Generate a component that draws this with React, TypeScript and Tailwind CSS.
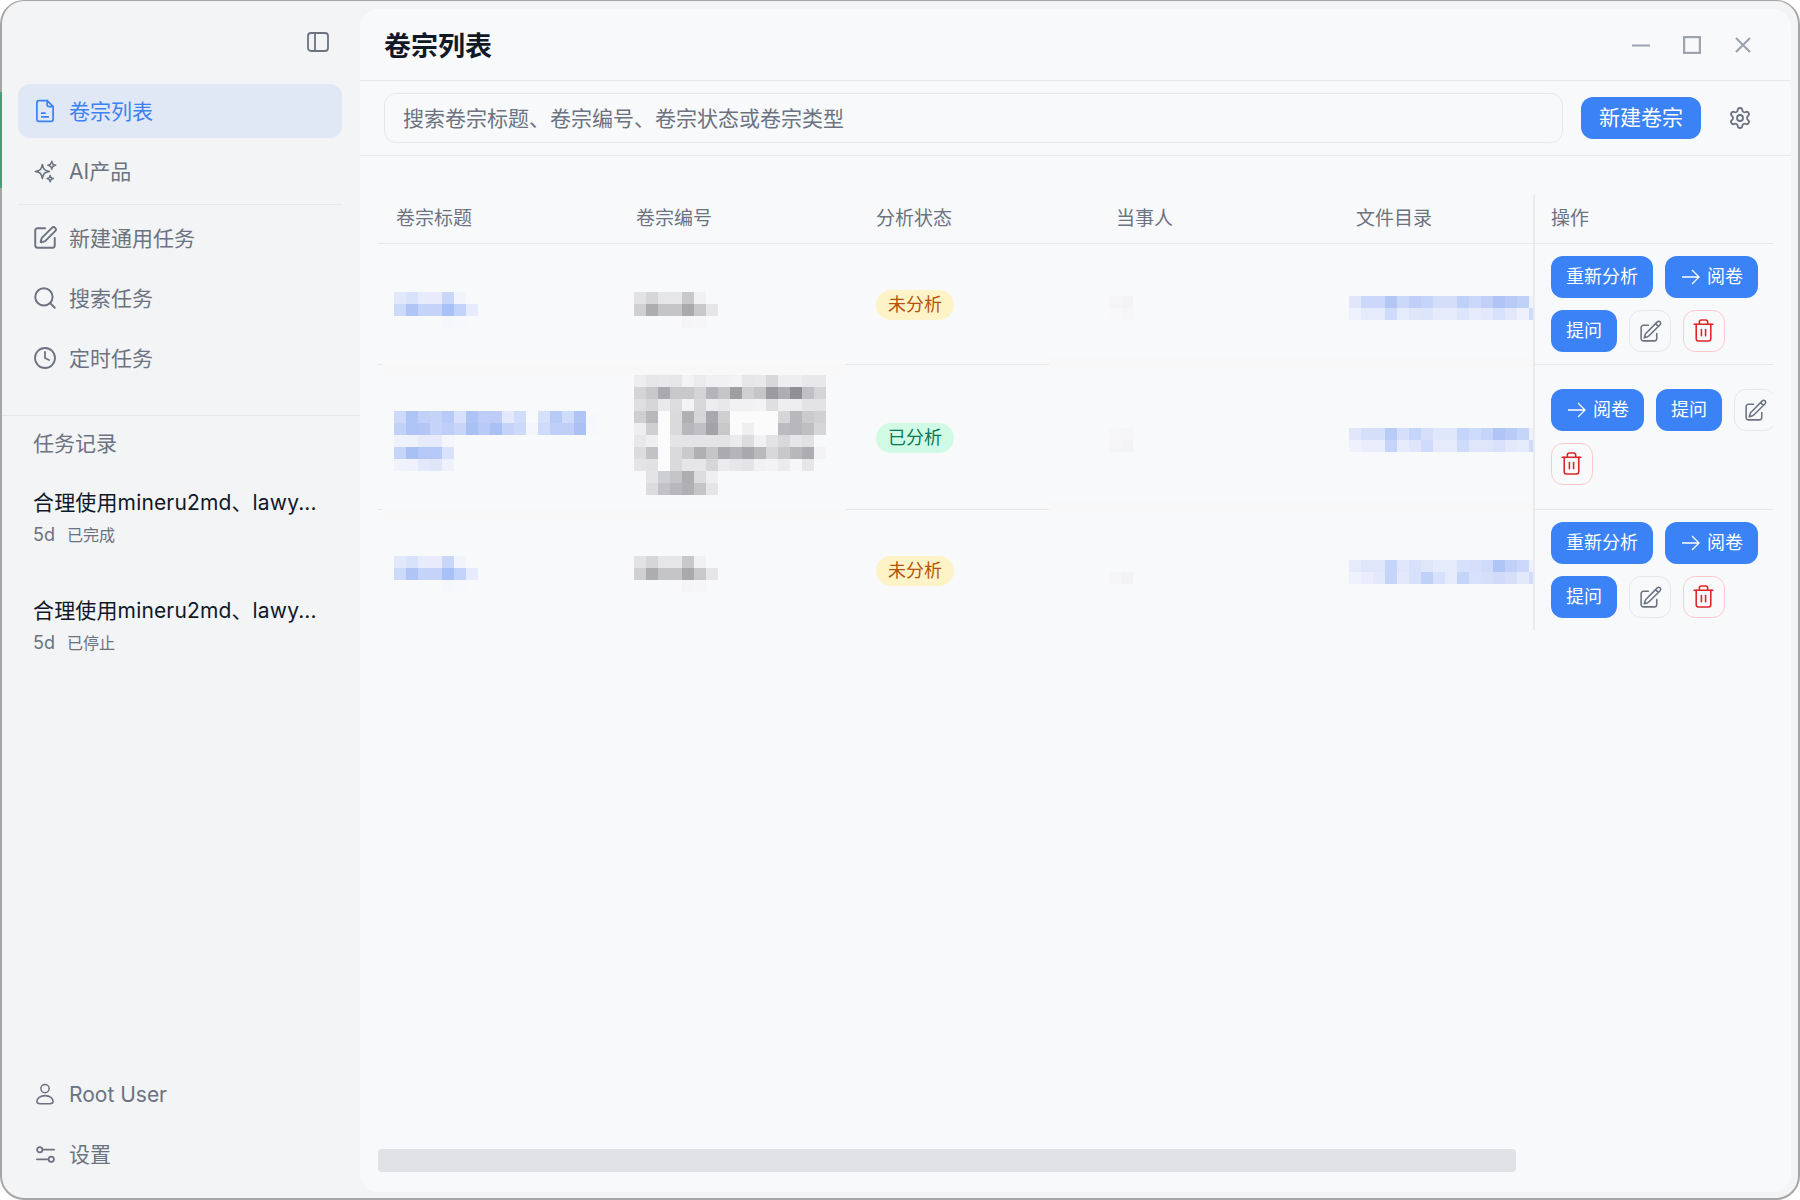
import { Clock, Search, Settings, SquarePen, Trash2 } from "lucide-react";
import { HiOutlinePencilSquare, HiOutlineSparkles } from "react-icons/hi2";

const FONT = "font-['Inter','Noto_Sans_CJK_SC',sans-serif]";

// 打码区域：每行一串颜色，"." 表示空格子
const Mosaic = ({ rows, className }: { rows: string[]; className?: string }) => {
    const grid = rows.map((r) => r.split(" "));
    const cols = Math.max(...grid.map((r) => r.length));
    return (
        <svg
            width={cols * 12}
            height={grid.length * 12}
            shapeRendering="crispEdges"
            className={`shrink-0 ${className ?? ""}`}
        >
            {grid.map((r, y) =>
                r.map((c, x) =>
                    c === "." ? null : (
                        <rect key={`${x}-${y}`} x={x * 12} y={y * 12} width={12} height={12} fill={`#${c}`} />
                    )
                )
            )}
        </svg>
    );
};

const titleShort = [
    "e0e8fa d8e2fb e8ebfb e8ebfb c8d6f8 f2f4fd .",
    "ccdafa b0c4f6 c5d3f8 c5d3f8 a8c0f5 c2d2f8 e6ecfb",
    ". . . . f5f7fd f6f8fd .",
];
const numberShort = [
    "e3e3e5 d6d6d9 e6e6e8 e6e6e8 c8c8cb f1f1f3 .",
    "d0d0d3 adadb1 c5c5c8 c5c5c8 a9a9ad c8c8cb e6e6e8",
    ". . . . f5f5f7 f6f6f8 .",
];
const titleLong = [
    "cdd9f9 aec3f6 c2d0f8 c5d3f8 b8caf7 d8e1fb afc4f6 bdcdf7 bdcdf7 e3e9fb cfdcfa . d6e0fb b8caf7 cfdbfa b0c5f6 f7f8fd",
    "c2d1f8 aec3f6 b3c6f6 c5d3f8 bfcef8 c8d5f9 a9c0f5 b8caf7 a9c0f5 c5d3f8 ccd9fa f5f6fd cfdbfa bfcff8 bfcff8 abc1f5 f7f8fd",
    "eff2fd eff2fd e6ebfb e6ebfb f4f5fd",
    "c5d4f9 a9c0f5 b5c8f7 b5c8f7 dae2fb",
    "f0f3fd eff2fd e3e9fb dfe6fa eef1fc",
];
const numberLong = [
    "ededef e6e6e8 e8e8ea e6e6e8 f3f3f5 ebebed f1f1f3 f1f1f3 f3f3f5 e6e6e8 e8e8ea d8d8db eeeef0 eeeef0 e8e8ea e8e8ea",
    "d4d4d7 c8c8cb aaaaae c8c8cb c8c8cb d4d4d7 b5b5b9 c5c5c8 9f9fa3 cfcfd2 c5c5c8 9a9a9f aeaeb2 8f8f94 c0c0c4 d4d4d7",
    "dfdfe1 d6d6d9 eaeaec dcdcdf f3f3f5 d8d8db ededef e8e8ea f1f1f3 f1f1f3 f3f3f5 dfdfe1 eeeef0 eeeef0 e3e3e5 e3e3e5",
    "cfcfd2 b8b8bc fbfbfc dadadc b0b0b4 d6d6d9 a9a9ad cfcfd2 fbfbfc fbfbfc fbfbfc fbfbfc d6d6d9 b8b8bc cbcbce d1d1d4",
    "eeeef0 cfcfd2 fbfbfc dadadc b8b8bc c0c0c4 a3a3a7 c8c8cb fbfbfc efeff1 fbfbfc fbfbfc bbbbbf b8b8bc bfbfc2 d6d6d9",
    "e8e8ea efeff1 fbfbfc e4e4e6 e4e4e6 e4e4e6 e4e4e6 e4e4e6 ebebed dcdcdf f1f1f3 e3e3e5 d8d8db e6e6e8 e1e1e3",
    "dcdcdf c2c2c6 fbfbfc dadadc cacacd b0b0b4 c5c5c8 abaaaf b5b5b9 a9a9ad b9b9bc d8d8db c8c8cb b8b8bc adadb1 f3f3f5",
    "e4e4e6 e1e1e3 fbfbfc dadadc e6e6e8 e6e6e8 d6d6d9 ebebed e6e6e8 e4e4e6 f1f1f3 f3f3f5 ebebed f6f6f8 e6e6e8",
    ". e4e4e6 cecfd2 c5c5c8 aeaeb2 dcdcdf efeff1",
    ". dcdcdf c2c2c6 b8b8bc b0b0b4 c5c5c8 e4e4e6",
];
const file1 = [
    "e1e6fa cbd8f9 cbd8f9 b3c7f5 cbd8f9 c0cff8 c5d4f9 d5def9 d5def9 c0d1f8 cbd8f9 c0d0f8 b0c5f6 b8cbf7 c0d1f8 eef1fb",
    "eff2fd e6ebfb e6ebfb cfdbfa e6ebfb dfe6fa dde5fa e6ebfb e6ebfb dde5fa e6ebfb e3e9fb d8e1fb e3e9fb eef1fb cfdbfa",
];
const file2 = [
    "e1e6fa d5dffa d5dffa b8cbf7 d5dffa c5d4f9 d5dffa dfe7fa dfe7fa c5d4f9 cfdbfa c5d4f9 b0c5f6 b8cbf7 c5d4f9 eef1fb",
    "eff2fd e9edfc e9edfc c5d4f9 e6ebfb dfe6fa cfdbfa e6ebfb e6ebfb cfdbfa dfe6fa dde5fa d8e1fb e3e9fb e6ebfb cfdbfa",
];
const file3 = [
    "e6eafb dfe6fa dfe6fa c5d4f9 dfe6fa d8e1fb dfe6fa e6ebfb e6ebfb d8e1fb d5dffa cfdbfa b0c5f6 c0d1f8 cbd8f9 eef1fb",
    "eff2fd e9edfc e3e9fb c5d4f9 e3e9fb d8e1fb c0d1f8 d8e1fb e6ebfb c5d4f9 d8e1fb d5dffa d0dbfa d5dffa e3e9fb cfdbfa",
];

const DocIcon = () => (
    <svg viewBox="0 0 24 24" fill="none" stroke="currentColor" strokeWidth="1.6" strokeLinecap="round" strokeLinejoin="round" className="h-[26px] w-[26px]">
        <path d="M14 2.500v4a1.500 1.500 0 0 0 1.500 1.500h4" />
        <path d="M17.500 21.500h-11a2 2 0 0 1-2-2v-15a2 2 0 0 1 2-2h7.500l5.500 5.500v11.500a2 2 0 0 1-2 2Z" />
        <path d="M9 17.500h6M9 14h3" />
    </svg>
);

const PanelIcon = () => (
    <svg viewBox="0 0 24 24" fill="none" stroke="currentColor" strokeWidth="1.8" className="h-[24px] w-[24px]">
        <rect x="2" y="3" width="20" height="18" rx="3" />
        <path d="M9 3v18" />
    </svg>
);

const UserIcon = () => (
    <svg viewBox="0 0 24 24" fill="none" stroke="currentColor" strokeWidth="1.400" className="h-[26px] w-[26px]">
        <circle cx="12" cy="7" r="3.800" />
        <path d="M12 13.500c-4.500 0-7.500 2.500-7.500 5.500 0 1.500 1.500 2 3 2h9c1.500 0 3-.5 3-2 0-3-3-5.500-7.500-5.500Z" />
    </svg>
);

const SlidersIcon = () => (
    <svg viewBox="0 0 24 24" fill="none" stroke="currentColor" strokeWidth="1.800" strokeLinecap="round" className="h-[23px] w-[23px]">
        <circle cx="6" cy="7" r="2.800" />
        <path d="M9 7h12" />
        <circle cx="18" cy="17" r="2.800" />
        <path d="M3 17h12" />
    </svg>
);

const NavItem = ({ icon, label, active }: { icon: React.ReactNode; label: string; active?: boolean }) => (
    <div
        className={`flex h-[54px] items-center gap-[11px] rounded-[12px] px-[14px] text-[21px] ${
            active ? "bg-[#e0e7f5] text-[#3b82f6]" : "text-[#6b7280]"
        }`}
    >
        <span className="flex w-[26px] justify-center">{icon}</span>
        <span className="pt-[2px]">{label}</span>
    </div>
);

const TaskItem = ({ status }: { status: string }) => (
    <div className="h-[108px] px-[15px]">
        <div className="truncate text-[21px] leading-[30px] tracking-[0.15px] text-[#111827]">
            合理使用mineru2md、lawy...
        </div>
        <div className="mt-[2px] flex items-center gap-[12px] leading-[30px] text-[#6b7280]">
            <span className="text-[18px]">5d</span>
            <span className="text-[16px]">{status}</span>
        </div>
    </div>
);

const BlueButton = ({ children }: { children: React.ReactNode }) => (
    <button className="flex h-[42px] items-center rounded-[12px] bg-[#3b82f6] px-[15px] pb-[2px] text-[18px] text-white">
        {children}
    </button>
);

const ReadButton = () => (
    <BlueButton>
        <svg viewBox="0 0 18 16" fill="none" stroke="currentColor" strokeWidth="1.300" className="mt-[2px] mr-[7px] ml-[2px] h-[16px] w-[18px]">
            <path d="M0 8h17M10 1l7 7-7 7" />
        </svg>
        阅卷
    </BlueButton>
);

const EditButton = () => (
    <button className="flex h-[42px] w-[42px] shrink-0 items-center justify-center rounded-[12px] border border-[#e5e7eb] text-[#6b7280]">
        <HiOutlinePencilSquare className="h-[25px] w-[25px]" />
    </button>
);

const DeleteButton = () => (
    <button className="flex h-[42px] w-[42px] shrink-0 items-center justify-center rounded-[12px] border border-[#fecaca] pr-[1px] pb-[1px] text-[#dc2626]">
        <Trash2 className="h-[25px] w-[25px]" strokeWidth={1.5} />
    </button>
);

const StatusPill = ({ done }: { done?: boolean }) => (
    <span
        className={`inline-flex h-[30px] w-[78px] items-center justify-center rounded-full pb-[1px] text-[18px] ${
            done ? "bg-[#d1fae5] text-[#047857]" : "bg-[#fef3c7] text-[#b45309]"
        }`}
    >
        {done ? "已分析" : "未分析"}
    </span>
);

const headers = ["卷宗标题", "卷宗编号", "分析状态", "当事人", "文件目录"];

export default function App() {
    return (
        <div className={`relative h-[1200px] w-[1800px] overflow-hidden bg-white ${FONT}`}>
            <div className="flex h-full overflow-hidden rounded-[24px] border-t border-r-2 border-b-2 border-l-2 border-[#a6a6a6] bg-[#f3f4f6]">
                {/* 侧边栏 */}
                <aside className="flex w-[358px] shrink-0 flex-col">
                    <div className="flex h-[83px] justify-end pt-[29px] pr-[30px] text-[#6b7280]">
                        <PanelIcon />
                    </div>
                    <div className="flex flex-col gap-[6px] pr-[18px] pl-[16px]">
                        <NavItem icon={<DocIcon />} label="卷宗列表" active />
                        <NavItem icon={<HiOutlineSparkles className="h-[25px] w-[25px]" />} label="AI产品" />
                        <div className="h-px bg-[#e5e7eb]" />
                        <NavItem icon={<SquarePen className="h-[26px] w-[26px]" strokeWidth={1.8} />} label="新建通用任务" />
                        <NavItem icon={<Search className="h-[26px] w-[26px]" strokeWidth={1.8} />} label="搜索任务" />
                        <NavItem icon={<Clock className="h-[24px] w-[24px]" strokeWidth={1.8} />} label="定时任务" />
                    </div>
                    <div className="mt-[30px] border-t border-[#e5e7eb] px-[16px] pt-[13px]">
                        <div className="px-[15px] text-[21px] leading-[30px] text-[#6b7280]">任务记录</div>
                        <div className="mt-[29px]">
                            <TaskItem status="已完成" />
                            <TaskItem status="已停止" />
                        </div>
                    </div>
                    <div className="mt-auto flex flex-col gap-[6px] pr-[18px] pb-[17px] pl-[16px]">
                        <NavItem icon={<UserIcon />} label="Root User" />
                        <NavItem icon={<SlidersIcon />} label="设置" />
                    </div>
                </aside>

                {/* 主面板 */}
                <main className="mt-[8px] mr-[7px] mb-[6px] flex min-w-0 flex-1 flex-col rounded-[18px] bg-[#f8f9fb]">
                    <div className="flex h-[72px] shrink-0 items-center border-b border-[#e5e7eb] pl-[24px] text-[#9ca3af]">
                        <h1 className="flex-1 pt-[6px] text-[27px] font-bold text-[#111827]">卷宗列表</h1>
                        <svg viewBox="0 0 18 18" fill="none" stroke="currentColor" strokeWidth="2.200" className="h-[18px] w-[18px]">
                            <path d="M0 9.500h18" />
                        </svg>
                        <svg viewBox="0 0 18 18" fill="none" stroke="currentColor" strokeWidth="2.200" className="ml-[33px] h-[18px] w-[18px]">
                            <rect x="1.100" y="1.100" width="15.800" height="15.800" />
                        </svg>
                        <svg viewBox="0 0 16 16" fill="none" stroke="currentColor" strokeWidth="2.200" className="mr-[40px] ml-[34px] h-[16px] w-[16px]">
                            <path d="M1 1l14 14M15 1 1 15" />
                        </svg>
                    </div>

                    <div className="flex h-[75px] shrink-0 items-center border-b border-[#e5e7eb] pr-[39px] pl-[24px]">
                        <input
                            placeholder="搜索卷宗标题、卷宗编号、卷宗状态或卷宗类型"
                            className="h-[50px] flex-1 rounded-[12px] border border-[#e5e7eb] px-[18px] text-[21px] outline-none placeholder:text-[#6b7280]"
                        />
                        <button className="ml-[18px] h-[42px] w-[120px] rounded-[12px] bg-[#3b82f6] text-[21px] text-white">
                            新建卷宗
                        </button>
                        <Settings className="ml-[27px] h-[24px] w-[24px] text-[#6b7280]" strokeWidth={1.8} />
                    </div>

                    <div className="flex flex-1 flex-col px-[18px] pt-[39px] pb-[20px]">
                        <div className="relative flex-1">
                            {/* 表头 */}
                            <div className="flex h-[49px] border-b border-[#e5e7eb] text-[19px] text-[#6b7280]">
                                <div className="flex min-w-0 flex-1 overflow-hidden">
                                    {headers.map((h) => (
                                        <div key={h} className="w-[240px] shrink-0 pt-[10px] pl-[18px]">
                                            {h}
                                        </div>
                                    ))}
                                </div>
                                <div className="w-[240px] shrink-0 border-l-2 border-[#e9eaee] pt-[10px] pl-[16px]">操作</div>
                            </div>

                            {/* 第一行 */}
                            <div className="flex h-[121px] border-b border-[#e5e7eb]">
                                <div className="flex min-w-0 flex-1 overflow-hidden">
                                    <div className="w-[240px] shrink-0 pl-[16px]"><Mosaic rows={titleShort} className="mt-[48px]" /></div>
                                    <div className="w-[240px] shrink-0 pl-[16px]"><Mosaic rows={numberShort} className="mt-[48px]" /></div>
                                    <div className="w-[240px] shrink-0 pt-[46px] pl-[18px]"><StatusPill /></div>
                                    <div className="w-[240px] shrink-0 pl-[11px]"><Mosaic rows={["f5f5f7 f3f3f5", "f8f8fa f6f6f8"]} className="mt-[52px]" /></div>
                                    <div className="w-[240px] shrink-0 pl-[11px]"><Mosaic rows={file1} className="mt-[52px]" /></div>
                                </div>
                                <div className="w-[240px] shrink-0 overflow-hidden border-l-2 border-[#e9eaee] pt-[12px] pl-[16px]">
                                    <div className="flex w-[230px] flex-wrap gap-[12px]">
                                        <BlueButton>重新分析</BlueButton>
                                        <ReadButton />
                                        <BlueButton>提问</BlueButton>
                                        <EditButton />
                                        <DeleteButton />
                                    </div>
                                </div>
                            </div>

                            {/* 第二行 */}
                            <div className="flex h-[145px] border-b border-[#e5e7eb]">
                                <div className="flex min-w-0 flex-1 overflow-hidden">
                                    <div className="w-[240px] shrink-0 pl-[16px]"><Mosaic rows={titleLong} className="mt-[46px]" /></div>
                                    <div className="w-[240px] shrink-0 pl-[16px]"><Mosaic rows={numberLong} className="mt-[10px]" /></div>
                                    <div className="w-[240px] shrink-0 pt-[58px] pl-[18px]"><StatusPill done /></div>
                                    <div className="w-[240px] shrink-0 pl-[11px]"><Mosaic rows={["f7f7f9 f6f6f8", "f5f5f7 f3f3f5"]} className="mt-[63px]" /></div>
                                    <div className="w-[240px] shrink-0 pl-[11px]"><Mosaic rows={file2} className="mt-[63px]" /></div>
                                </div>
                                <div className="w-[240px] shrink-0 overflow-hidden border-l-2 border-[#e9eaee] pt-[24px] pl-[16px]">
                                    <div className="flex w-[230px] flex-wrap gap-[12px]">
                                        <ReadButton />
                                        <BlueButton>提问</BlueButton>
                                        <EditButton />
                                        <DeleteButton />
                                    </div>
                                </div>
                            </div>

                            {/* 第三行 */}
                            <div className="flex h-[120px]">
                                <div className="flex min-w-0 flex-1 overflow-hidden">
                                    <div className="w-[240px] shrink-0 pl-[16px]"><Mosaic rows={titleShort} className="mt-[46px]" /></div>
                                    <div className="w-[240px] shrink-0 pl-[16px]"><Mosaic rows={numberShort} className="mt-[46px]" /></div>
                                    <div className="w-[240px] shrink-0 pt-[46px] pl-[18px]"><StatusPill /></div>
                                    <div className="w-[240px] shrink-0 pl-[11px]"><Mosaic rows={["f6f6f8 f3f3f5"]} className="mt-[62px]" /></div>
                                    <div className="w-[240px] shrink-0 pl-[11px]"><Mosaic rows={file3} className="mt-[50px]" /></div>
                                </div>
                                <div className="w-[240px] shrink-0 overflow-hidden border-l-2 border-[#e9eaee] pt-[12px] pl-[16px]">
                                    <div className="flex w-[230px] flex-wrap gap-[12px]">
                                        <BlueButton>重新分析</BlueButton>
                                        <ReadButton />
                                        <BlueButton>提问</BlueButton>
                                        <EditButton />
                                        <DeleteButton />
                                    </div>
                                </div>
                            </div>

                            {/* 打码边缘的浅色带 */}
                            <div className="absolute top-[168px] left-[4px] h-[12px] w-[464px] bg-[#f8f8f9]" />
                            <div className="absolute top-[161px] left-[671px] h-[11px] w-[484px] bg-[#f8f8f9]" />
                            <div className="absolute top-[314px] left-[4px] h-[10px] w-[464px] bg-[#f8f8f9]" />
                            <div className="absolute top-[305px] left-[671px] h-[11px] w-[484px] bg-[#f8f8f9]" />
                        </div>

                        <div className="h-[23px] w-[1138px] rounded-[4px] bg-[#e1e2e6]" />
                    </div>
                </main>
            </div>
            <div className="absolute top-[92px] left-0 h-[96px] w-[2px] bg-[#4a9c75]" />
        </div>
    );
}
